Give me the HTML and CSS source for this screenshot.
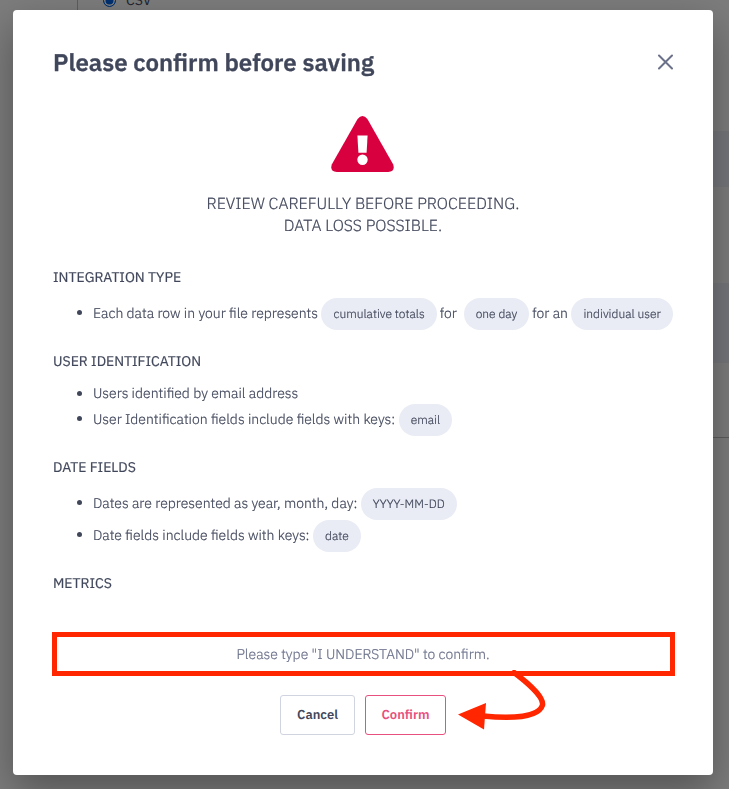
FILE: index.html
```
<!DOCTYPE html>
<html lang="en">
<head>
    <meta charset="UTF-8">
    <meta name="viewport" content="width=device-width, initial-scale=1.0">
    <title>Please confirm before saving</title>
    <link rel="stylesheet" href="styles.css">
</head>
<body>

<!-- Page behind the dialog -->
<div class="page">
    <div class="sidebar"></div>
    <div class="panel">
        <div class="option"><span class="radio"></span><span>CSV</span></div>
        <div class="row shaded"></div>
        <div class="row plain"></div>
        <div class="row shaded tall"></div>
        <div class="row last"></div>
    </div>
</div>

<!-- Confirm dialog -->
<div class="backdrop">
    <div class="modal">
        <div class="modal-header">
            <h1>Please confirm before saving</h1>
            <svg class="close" viewBox="0 0 16 16">
                <path d="M2 1.5L15 14.5M15 1.5L2 14.5"/>
            </svg>
        </div>

        <div class="warning">
            <svg class="warning-icon" viewBox="0 0 63 56">
                <path class="triangle" d="M26.6 3.1Q31.5 -3 36.4 3.1L62.1 48.2Q64.6 55.6 57.2 56H5.8Q-1.6 55.6 .9 48.2Z"/>
                <path class="mark" d="M26.4 19.4H36.6L35.6 36.8H27.4Z"/>
                <circle class="mark" cx="31.5" cy="43.7" r="5.2"/>
            </svg>
            <p>REVIEW CAREFULLY BEFORE PROCEEDING.</p>
            <p>DATA LOSS POSSIBLE.</p>
        </div>

        <div class="section">
            <h2>INTEGRATION TYPE</h2>
            <ul>
                <li>
                    <span class="text">Each data row in your file represents</span>
                    <span class="pill">cumulative totals</span>
                    <span class="text for">for</span>
                    <span class="pill">one day</span>
                    <span class="text">for an</span>
                    <span class="pill">individual user</span>
                </li>
            </ul>
        </div>
        <div class="section">
            <h2>USER IDENTIFICATION</h2>
            <ul>
                <li class="short"><span class="text">Users identified by email address</span></li>
                <li>
                    <span class="text">User Identification fields include fields with keys:</span>
                    <span class="pill">email</span>
                </li>
            </ul>
        </div>
        <div class="section">
            <h2>DATE FIELDS</h2>
            <ul>
                <li>
                    <span class="text">Dates are represented as year, month, day:</span>
                    <span class="pill">YYYY-MM-DD</span>
                </li>
                <li>
                    <span class="text">Date fields include fields with keys:</span>
                    <span class="pill">date</span>
                </li>
            </ul>
        </div>
        <div class="section">
            <h2>METRICS</h2>
        </div>

        <input class="confirm-input" type="text" placeholder='Please type "I UNDERSTAND" to confirm.'>

        <div class="buttons">
            <button class="cancel">Cancel</button>
            <button class="confirm">Confirm</button>
            <svg class="arrow" viewBox="0 0 90 62">
                <path class="curve" d="M54 1C69 12 86 27 84.5 35C81 47 55 49 25 46"/>
                <path class="head" d="M0 44.5L28 33L26 59.5Z"/>
            </svg>
        </div>
    </div>
</div>

</body>
</html>
```
FILE: styles.css
```
* {
    box-sizing: border-box;
}

body {
    margin: 0;
    height: 789px;
    overflow: hidden;
    color: #41475b;
    font-family: "IBM Plex Sans", Roboto, sans-serif;
    font-size: 14px;
    font-weight: 300;
    line-height: 22px;
    text-rendering: geometricPrecision;
}

h1, h2, p, ul {
    margin: 0;
    padding: 0;
}

/* Page behind the dialog */
.page {
    display: flex;
    height: 789px;
    background-color: #f8f8f8;
}

.sidebar {
    width: 78px;
    height: 437px;
    border-right: 1px solid #bbb;
}

.panel {
    flex: 1;
}

.option {
    display: flex;
    align-items: flex-start;
    gap: 10px;
    height: 131px;
    padding-left: 25px;
    font-weight: 400;
    line-height: 1px;
}

.radio {
    width: 13px;
    height: 13px;
    margin-top: -6px;
    border: 1px solid #0060df;
    border-radius: 50%;
    background-color: #0060df;
    box-shadow: inset 0 0 0 1.5px #fff;
}

.row {
    height: 56px;
}

.shaded {
    background-color: #e9ecf4;
}

.plain {
    height: 96px;
}

.tall {
    height: 80px;
}

.last {
    height: 75px;
    border-bottom: 1px solid #bbb;
}

/* Dialog */
.backdrop {
    position: fixed;
    inset: 0;
    padding: 10px 16px 14px 13px;
    background-color: rgba(0, 0, 0, 0.5);
}

.modal {
    height: 765px;
    padding: 40px;
    border-radius: 4px;
    background-color: #fff;
    box-shadow: 0 16px 40px rgba(0, 0, 0, 0.33);
}

.modal-header {
    display: flex;
    align-items: center;
    justify-content: space-between;
    height: 24px;
}

h1 {
    font-size: 24px;
    font-weight: 600;
    -webkit-text-stroke: 0.3px;
}

.close {
    width: 16px;
    height: 16px;
    fill: none;
    stroke: #6b718a;
    stroke-width: 2;
    stroke-linecap: round;
}

.warning {
    height: 150px;
    margin-top: 42px;
    font-size: 16px;
    text-align: center;
    -webkit-text-stroke: 0.2px;
}

.warning-icon {
    display: block;
    width: 63px;
    height: 56px;
    margin: 0 0 21px 278px;
}

.triangle {
    fill: #d9003f;
}

.mark {
    fill: #fff;
}

.section {
    margin-bottom: 20px;
}

h2 {
    font-size: 14px;
    font-weight: 400;
    line-height: 22px;
    -webkit-text-stroke: 0.2px;
}

ul {
    margin-top: 10px;
    list-style: none;
}

li {
    display: flex;
    align-items: center;
    height: 32px;
    white-space: nowrap;
    -webkit-text-stroke: 0.2px;
}

li::before {
    content: "";
    flex-shrink: 0;
    width: 5px;
    height: 5px;
    margin: 0 11px 3px 24px;
    border-radius: 50%;
    background-color: #41475b;
}

li.short {
    height: 22px;
}

li.short::before {
    margin-bottom: 0;
}

.text {
    margin-right: 3.5px;
    padding-bottom: 2px;
}

.short .text {
    padding-bottom: 0;
}

.for {
    margin-right: 7px;
}

.pill {
    height: 32px;
    margin-right: 3px;
    padding: 0 12px;
    border-radius: 16px;
    background-color: #e9ecf4;
    font-size: 12px;
    line-height: 33px;
}

.pill:last-child {
    margin-right: 0;
}

.confirm-input {
    display: block;
    width: 623px;
    height: 44px;
    margin: 38px 0 19px -1px;
    padding: 0 1px 0 0;
    border: 5px solid #ff2600;
    outline: none;
    font: inherit;
    text-align: center;
    text-rendering: inherit;
}

.confirm-input::placeholder {
    color: #6b718a;
    opacity: 1;
    -webkit-text-stroke: 0.2px;
}

.buttons {
    position: relative;
    display: flex;
    justify-content: center;
    gap: 10px;
}

button {
    height: 40px;
    padding: 0 0 2px;
    border: 1px solid #d0d3e0;
    border-radius: 3px;
    background-color: #fff;
    color: #41475b;
    font-family: inherit;
    font-size: 13px;
    font-weight: 600;
    text-rendering: inherit;
}

.cancel {
    width: 75px;
}

.confirm {
    width: 81px;
    border-color: #e8507f;
    color: #e8507f;
}

/* Arrow from the input to the confirm button */
.arrow {
    position: absolute;
    top: -25px;
    left: 405px;
    width: 90px;
    height: 62px;
}

.curve {
    fill: none;
    stroke: #ff2600;
    stroke-width: 5.5;
}

.head {
    fill: #ff2600;
}
```
